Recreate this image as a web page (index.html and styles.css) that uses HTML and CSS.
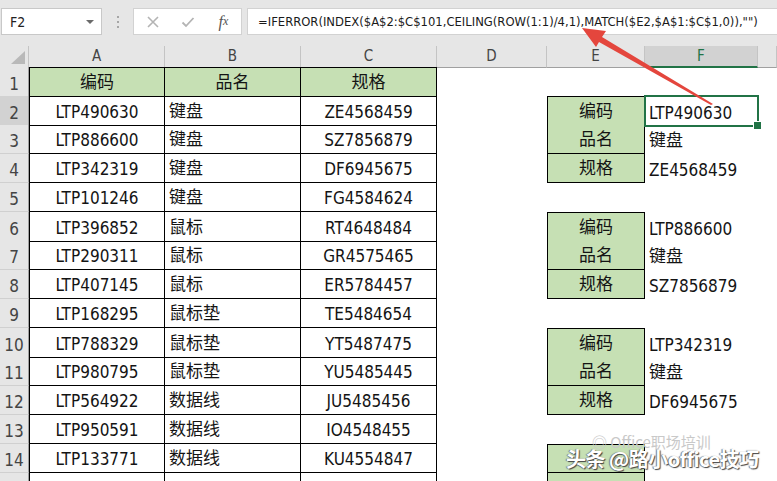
FILE: index.html
```html
<!DOCTYPE html>
<html lang="zh-CN">
<head>
    <meta charset="UTF-8">
    <title>IFERROR INDEX 示例</title>
    <link rel="stylesheet" href="styles.css">
</head>
<body>

<div class="topbar">
    <div class="namebox">F2<span class="drop"></span></div>
    <div class="grip"><i></i><i></i><i></i></div>
    <div class="fxbtns">
        <span class="btn">
            <svg width="14" height="14" viewBox="0 0 14 14"><path d="M2 2 L12 12 M12 2 L2 12" stroke="#b4b4b4" stroke-width="1.6" fill="none"/></svg>
        </span>
        <span class="btn">
            <svg width="14" height="14" viewBox="0 0 14 14"><path d="M1.5 7.5 L5 11 L12.5 3" stroke="#b4b4b4" stroke-width="1.8" fill="none"/></svg>
        </span>
        <span class="btn fx">f<sub>x</sub></span>
    </div>
    <div class="formula">=IFERROR(INDEX($A$2:$C$101,CEILING(ROW(1:1)/4,1),MATCH($E2,$A$1:$C$1,0)),"")</div>
</div>

<div class="sheet">
    <div class="row head">
        <div class="corner"><span class="tri"></span></div>
        <div class="col">A</div>
        <div class="col">B</div>
        <div class="col">C</div>
        <div class="col">D</div>
        <div class="col">E</div>
        <div class="col sel">F</div>
        <div class="col"></div>
    </div>

    <div class="row">
        <div class="rh">1</div>
        <div class="c t first top g ctr">编码</div>
        <div class="c t top g ctr">品名</div>
        <div class="c t top g ctr">规格</div>
        <div class="c"></div><div class="c"></div><div class="c"></div><div class="c"></div>
    </div>
    <div class="row">
        <div class="rh on">2</div>
        <div class="c t first ctr">LTP490630</div>
        <div class="c t">键盘</div>
        <div class="c t ctr">ZE4568459</div>
        <div class="c"></div>
        <div class="c e top g ctr">编码</div>
        <div class="c cur">LTP490630</div>
        <div class="c"></div>
    </div>
    <div class="row">
        <div class="rh">3</div>
        <div class="c t first ctr">LTP886600</div>
        <div class="c t">键盘</div>
        <div class="c t ctr">SZ7856879</div>
        <div class="c"></div>
        <div class="c e g ctr">品名</div>
        <div class="c">键盘</div>
        <div class="c"></div>
    </div>
    <div class="row">
        <div class="rh">4</div>
        <div class="c t first ctr">LTP342319</div>
        <div class="c t">键盘</div>
        <div class="c t ctr">DF6945675</div>
        <div class="c"></div>
        <div class="c e g ctr">规格</div>
        <div class="c">ZE4568459</div>
        <div class="c"></div>
    </div>
    <div class="row">
        <div class="rh">5</div>
        <div class="c t first ctr">LTP101246</div>
        <div class="c t">键盘</div>
        <div class="c t ctr">FG4584624</div>
        <div class="c"></div><div class="c"></div><div class="c"></div><div class="c"></div>
    </div>
    <div class="row">
        <div class="rh">6</div>
        <div class="c t first ctr">LTP396852</div>
        <div class="c t">鼠标</div>
        <div class="c t ctr">RT4648484</div>
        <div class="c"></div>
        <div class="c e top g ctr">编码</div>
        <div class="c">LTP886600</div>
        <div class="c"></div>
    </div>
    <div class="row">
        <div class="rh">7</div>
        <div class="c t first ctr">LTP290311</div>
        <div class="c t">鼠标</div>
        <div class="c t ctr">GR4575465</div>
        <div class="c"></div>
        <div class="c e g ctr">品名</div>
        <div class="c">键盘</div>
        <div class="c"></div>
    </div>
    <div class="row">
        <div class="rh">8</div>
        <div class="c t first ctr">LTP407145</div>
        <div class="c t">鼠标</div>
        <div class="c t ctr">ER5784457</div>
        <div class="c"></div>
        <div class="c e g ctr">规格</div>
        <div class="c">SZ7856879</div>
        <div class="c"></div>
    </div>
    <div class="row">
        <div class="rh">9</div>
        <div class="c t first ctr">LTP168295</div>
        <div class="c t">鼠标垫</div>
        <div class="c t ctr">TE5484654</div>
        <div class="c"></div><div class="c"></div><div class="c"></div><div class="c"></div>
    </div>
    <div class="row">
        <div class="rh">10</div>
        <div class="c t first ctr">LTP788329</div>
        <div class="c t">鼠标垫</div>
        <div class="c t ctr">YT5487475</div>
        <div class="c"></div>
        <div class="c e top g ctr">编码</div>
        <div class="c">LTP342319</div>
        <div class="c"></div>
    </div>
    <div class="row">
        <div class="rh">11</div>
        <div class="c t first ctr">LTP980795</div>
        <div class="c t">鼠标垫</div>
        <div class="c t ctr">YU5485445</div>
        <div class="c"></div>
        <div class="c e g ctr">品名</div>
        <div class="c">键盘</div>
        <div class="c"></div>
    </div>
    <div class="row">
        <div class="rh">12</div>
        <div class="c t first ctr">LTP564922</div>
        <div class="c t">数据线</div>
        <div class="c t ctr">JU5485456</div>
        <div class="c"></div>
        <div class="c e g ctr">规格</div>
        <div class="c">DF6945675</div>
        <div class="c"></div>
    </div>
    <div class="row">
        <div class="rh">13</div>
        <div class="c t first ctr">LTP950591</div>
        <div class="c t">数据线</div>
        <div class="c t ctr">IO4548455</div>
        <div class="c"></div><div class="c"></div><div class="c"></div><div class="c"></div>
    </div>
    <div class="row">
        <div class="rh">14</div>
        <div class="c t first ctr">LTP133771</div>
        <div class="c t">数据线</div>
        <div class="c t ctr">KU4554847</div>
        <div class="c"></div>
        <div class="c e top g ctr"></div>
        <div class="c"></div>
        <div class="c"></div>
    </div>
    <!-- row 15 is only partly in view -->
    <div class="row">
        <div class="rh"></div>
        <div class="c t first"></div>
        <div class="c t"></div>
        <div class="c t"></div>
        <div class="c"></div>
        <div class="c e g"></div>
        <div class="c"></div>
        <div class="c"></div>
    </div>
</div>

<!-- annotation arrow drawn over the sheet -->
<svg class="arrow" width="777" height="481" viewBox="0 0 777 481">
    <polygon points="582,28 606,31 602,37 713,104 711,105 599,42 596,47" fill="#e4463d"/>
</svg>

<div class="watermark">
    <div class="wm-back">◎ Office职场培训</div>
    <div class="wm-front">头条 @路小office技巧</div>
</div>

</body>
</html>
```

FILE: styles.css
```css
* {
    box-sizing: border-box;
}

body {
    margin: 0;
    width: 777px;
    height: 481px;
    overflow: hidden;
    position: relative;
    background: #e6e6e6;
    font-family: "DejaVu Sans Condensed", "Noto Sans CJK SC", sans-serif;
    color: #141414;
}

/* formula bar */
.topbar {
    display: flex;
    height: 46px;
    padding: 8px 0 0 1px;
}

.namebox {
    width: 101px;
    height: 27px;
    background: #fff;
    border: 1px solid #c8c8c8;
    display: flex;
    align-items: center;
    justify-content: space-between;
    padding: 0 7px 0 8px;
    font-size: 14px;
    color: #222;
}

.drop {
    border-left: 4px solid transparent;
    border-right: 4px solid transparent;
    border-top: 4px solid #6a6a6a;
}

.grip {
    width: 31px;
    height: 27px;
    display: flex;
    flex-direction: column;
    align-items: center;
    justify-content: center;
    gap: 3px;
}

.grip i {
    width: 2px;
    height: 2px;
    background: #a6a6a6;
}

.fxbtns {
    width: 109px;
    height: 27px;
    background: #fff;
    border: 1px solid #d2d2d2;
    display: flex;
    align-items: center;
    padding-left: 1px;
}

.btn {
    width: 36px;
    display: flex;
    justify-content: center;
    align-items: center;
}

.fx {
    font-family: "Liberation Serif", serif;
    font-style: italic;
    font-size: 16px;
    color: #555;
}

.fx sub {
    font-size: 12px;
    vertical-align: -1px;
}

.formula {
    flex: 1;
    margin-left: 5px;
    height: 27px;
    background: #fff;
    border: 1px solid #d2d2d2;
    border-right: none;
    padding-left: 10px;
    font-size: 12.9px;
    line-height: 25px;
    white-space: nowrap;
    overflow: hidden;
    color: #1a1a1a;
}

/* sheet grid */
.row {
    display: grid;
    grid-template-columns: 29px 136px 136px 136px 110px 98px 113px 19px;
    height: 29px;
    background: #fff;
}

.row.head {
    height: 21px;
    background: #e6e6e6;
}

.corner {
    border-right: 1px solid #c4c4c4;
    border-bottom: 1px solid #a0a0a0;
    display: flex;
    justify-content: flex-end;
    align-items: flex-end;
    padding: 0 3px 3px 0;
}

.tri {
    width: 14px;
    height: 13px;
    background: #b9b9b9;
    clip-path: polygon(100% 0, 100% 100%, 0 100%);
}

.col {
    border-right: 1px solid #c4c4c4;
    border-bottom: 1px solid #a0a0a0;
    text-align: center;
    font-size: 15px;
    line-height: 20px;
    color: #444;
}

.col.sel {
    background: #d2d2d2;
    border-bottom: 2px solid #217346;
    color: #217346;
}

.rh {
    background: #e6e6e6;
    border-right: 1px solid #a0a0a0;
    border-bottom: 1px solid #d0d0d0;
    display: flex;
    justify-content: center;
    align-items: flex-end;
    padding-bottom: 2px;
    font-size: 17px;
    color: #444;
}

.rh.on {
    background: #d2d2d2;
}

.c {
    display: flex;
    align-items: flex-end;
    padding: 0 4px 3px;
    font-size: 17px;
    white-space: nowrap;
}

.ctr {
    justify-content: center;
}

.g {
    background: #c6e0b4;
}

.t {
    border-right: 1px solid #000;
    border-bottom: 1px solid #000;
}

.t.first {
    border-left: 1px solid #000;
}

.e {
    border: 1px solid #000;
    border-top: none;
}

.t.top,
.e.top {
    border-top: 1px solid #000;
}

/* active cell F2 */
.cur {
    position: relative;
}

.cur::after {
    content: "";
    position: absolute;
    left: -1px;
    top: -1px;
    right: -1px;
    bottom: -1px;
    border: 2px solid #217346;
}

.cur::before {
    content: "";
    position: absolute;
    right: -4px;
    bottom: -4px;
    width: 7px;
    height: 7px;
    background: #217346;
    border: 1px solid #fff;
    z-index: 1;
}

.arrow {
    position: absolute;
    left: 0;
    top: 0;
    pointer-events: none;
}

.watermark {
    position: absolute;
    left: 566px;
    top: 434px;
    width: 211px;
}

.wm-back {
    padding-left: 26px;
    font-family: "Noto Sans CJK SC", sans-serif;
    font-size: 15px;
    line-height: 16px;
    color: #c9c9c9;
}

.wm-front {
    margin-top: -6px;
    font-family: "Noto Sans CJK SC", sans-serif;
    font-weight: bold;
    font-size: 20px;
    letter-spacing: -0.5px;
    color: #fff;
    text-shadow: 1px 1px 1px #444, -1px 0 1px #777;
    white-space: nowrap;
}
```
